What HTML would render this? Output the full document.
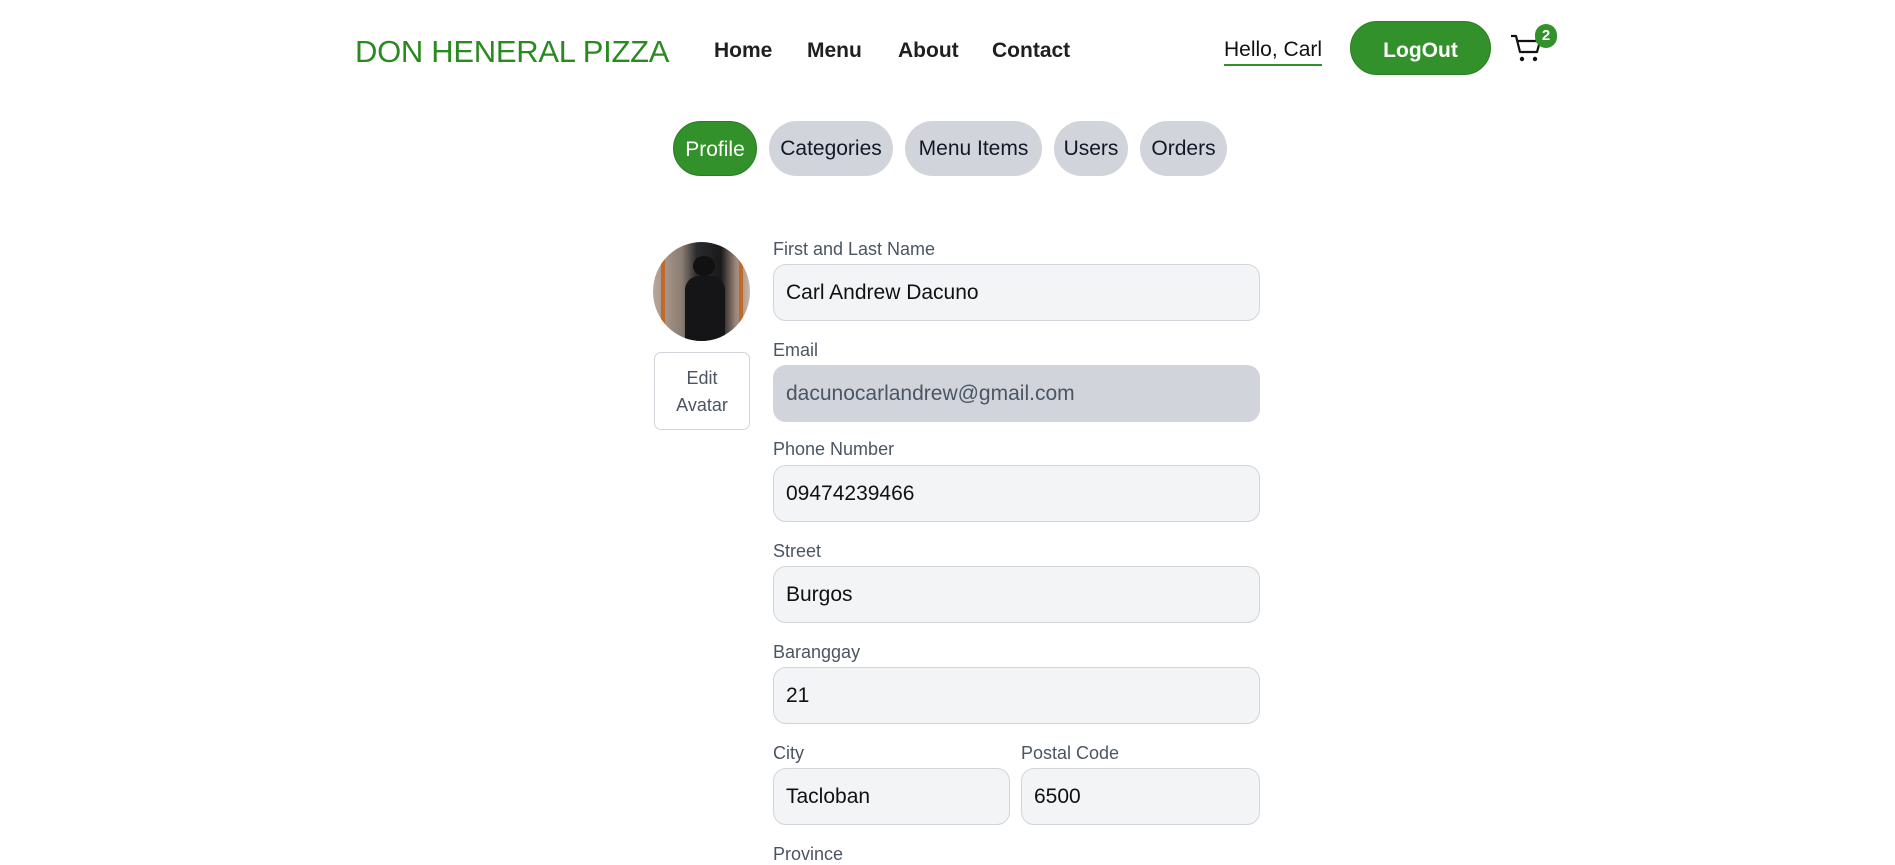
<!DOCTYPE html>
<html><head><meta charset="utf-8"><style>
*{box-sizing:border-box;margin:0;padding:0}
body{width:1895px;height:862px;background:#fff;font-family:"Liberation Sans",sans-serif;position:relative;overflow:hidden;color:#111}
.w{position:absolute;left:-2px;top:0;width:1895px;height:862px}
.a{position:absolute;white-space:nowrap}
.logo{left:357px;top:34px;font-size:31px;color:#2a8a1f;letter-spacing:-0.3px}
.nav{top:38px;font-size:21px;font-weight:bold;color:#1f1f1f}
.btn{left:1352px;top:21px;width:141px;height:54px;border-radius:27px;background:#33912b;border:1px solid #2a7d22;color:#fff;font-size:21px;font-weight:bold;text-align:center;line-height:58px}
.tab{top:121px;height:55px;border-radius:28px;background:#d1d5db;font-size:21px;line-height:55px;text-align:center;color:#111827}
.lbl{left:775px;font-size:18px;color:#4b5563}
.inp{left:775px;width:487px;height:57px;border:1px solid #d1d5db;border-radius:13px;background:#f3f4f6;font-size:21px;line-height:55px;padding-left:12px;color:#111}
</style></head><body><div class="w">
<div class="a logo">DON HENERAL PIZZA</div>
<div class="a nav" style="left:716px;top:39px">Home</div>
<div class="a nav" style="left:809px;top:39px">Menu</div>
<div class="a nav" style="left:900px;top:39px">About</div>
<div class="a nav" style="left:994px;top:39px">Contact</div>
<div class="a nav" style="left:1226px;top:38px;font-weight:normal;color:#111;border-bottom:2px solid #33912b;padding-bottom:2px">Hello, Carl</div>
<div class="a btn">LogOut</div>
<svg class="a" style="left:1512px;top:33px" width="32" height="30" viewBox="0 0 32 30"><path d="M1 3h5l4 16h17l3-11H8" fill="none" stroke="#111" stroke-width="2.2" stroke-linejoin="round"/><circle cx="12" cy="26" r="2.2" fill="#111"/><circle cx="25" cy="26" r="2.2" fill="#111"/></svg>
<div class="a" style="left:1537px;top:24px;width:22px;height:24px;border-radius:11px;background:#33912b;color:#fff;font-size:15px;font-weight:bold;text-align:center;line-height:24px">2</div>
<div class="a tab" style="left:675px;width:84px;background:#33912b;color:#fff;border:1px solid #2a7d22">Profile</div>
<div class="a tab" style="left:771px;width:124px">Categories</div>
<div class="a tab" style="left:907px;width:137px">Menu Items</div>
<div class="a tab" style="left:1056px;width:74px">Users</div>
<div class="a tab" style="left:1142px;width:87px">Orders</div>
<div class="a" style="left:655px;top:242px;width:97px;height:99px;border-radius:50%;overflow:hidden;background:linear-gradient(90deg,#b8a79a 0%,#8a7c72 30%,#2a2a2c 45%,#1a1a1c 70%,#9a8478 85%,#c8b8a8 100%)">
<div style="position:absolute;left:8px;top:0;width:4px;height:100%;background:#c06a2a"></div>
<div style="position:absolute;left:86px;top:0;width:4px;height:100%;background:#c06a2a"></div>
<div style="position:absolute;left:40px;top:14px;width:22px;height:20px;border-radius:50%;background:#111"></div>
<div style="position:absolute;left:32px;top:34px;width:40px;height:70px;border-radius:14px 14px 0 0;background:#151517"></div>
</div>
<div class="a" style="left:656px;top:352px;width:96px;height:78px;border:1px solid #d1d5db;border-radius:7px;color:#4b5563;font-size:18px;text-align:center;line-height:27px;padding-top:12px;white-space:normal">Edit<br>Avatar</div>
<div class="a lbl" style="top:239px">First and Last Name</div>
<div class="a inp" style="top:264px">Carl Andrew Dacuno</div>
<div class="a lbl" style="top:340px">Email</div>
<div class="a inp" style="top:365px;background:#d1d5db;color:#4b5563">dacunocarlandrew@gmail.com</div>
<div class="a lbl" style="top:439px">Phone Number</div>
<div class="a inp" style="top:465px">09474239466</div>
<div class="a lbl" style="top:541px">Street</div>
<div class="a inp" style="top:566px">Burgos</div>
<div class="a lbl" style="top:642px">Baranggay</div>
<div class="a inp" style="top:667px">21</div>
<div class="a lbl" style="top:743px">City</div>
<div class="a inp" style="top:768px;width:237px">Tacloban</div>
<div class="a lbl" style="top:743px;left:1023px">Postal Code</div>
<div class="a inp" style="top:768px;left:1023px;width:239px">6500</div>
<div class="a lbl" style="top:844px">Province</div>
</div></body></html>
